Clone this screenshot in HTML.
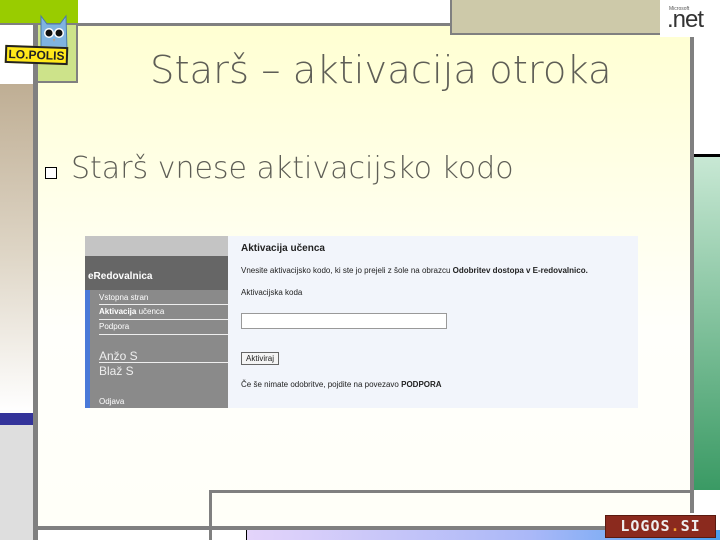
<!DOCTYPE html>
<html><head><meta charset="utf-8"><style>
body{margin:0;width:720px;height:540px;overflow:hidden;position:relative;background:#fff;font-family:"Liberation Sans",sans-serif}
div{position:absolute;box-sizing:border-box}
.t{font-family:"DejaVu Sans","Liberation Sans",sans-serif;font-weight:200;color:#5e5e56}
.s{font-size:9px;color:#222;white-space:nowrap}
</style></head><body>
<div style="left:38px;top:25px;width:652px;height:505px;background:linear-gradient(#ffffd2,#fffffb 60%,#fffff8)"></div>
<div style="left:0;top:0;width:78px;height:23px;background:#99cc00"></div>
<div style="left:78px;top:0;width:372px;height:23px;background:#fff"></div>
<div style="left:0;top:23px;width:450px;height:3px;background:#808080"></div>
<div style="left:450px;top:0;width:240px;height:33px;background:#cdc9a9;border-left:2px solid #808080"></div>
<div style="left:450px;top:33px;width:243px;height:2px;background:#808080"></div>
<div style="left:0;top:25px;width:33px;height:59px;background:#fff"></div>
<div style="left:38px;top:25px;width:40px;height:58px;background:#cde38a;border-right:2px solid #808080;border-bottom:2px solid #808080"></div>
<div style="left:0;top:84px;width:33px;height:329px;background:linear-gradient(#bfae94,#ddd4c4 50%,#fff)"></div>
<div style="left:0;top:413px;width:33px;height:12px;background:#33339a"></div>
<div style="left:0;top:425px;width:33px;height:115px;background:#dedede"></div>
<div style="left:33px;top:23px;width:5px;height:517px;background:#808080"></div>
<div style="left:690px;top:33px;width:4px;height:480px;background:#808080"></div>
<div style="left:694px;top:35px;width:26px;height:120px;background:#fff"></div>
<div style="left:694px;top:154px;width:26px;height:3px;background:#000"></div>
<div style="left:694px;top:157px;width:26px;height:333px;background:linear-gradient(#c8e8d4,#3a9a64)"></div>
<div style="left:694px;top:490px;width:26px;height:50px;background:#fff"></div>
<div style="left:209px;top:490px;width:484px;height:3px;background:#808080"></div>
<div style="left:209px;top:490px;width:3px;height:50px;background:#808080"></div>
<div style="left:38px;top:526px;width:652px;height:4px;background:#808080"></div>
<div style="left:38px;top:530px;width:171px;height:10px;background:#fff"></div>
<div style="left:246px;top:530px;width:474px;height:10px;background:linear-gradient(90deg,#e4d4fa,#aab8f8 60%,#4aa0f0);border-left:1px solid #000"></div>
<div style="left:605px;top:515px;width:111px;height:23px;background:#8b2a1e;border:1px solid #5a1a10;color:#eee;font:bold 15px 'DejaVu Sans Mono',monospace;letter-spacing:1px;text-align:center;line-height:21px">LOGOS<span style="color:#f0a030">.</span>SI</div>
<div style="left:660px;top:0;width:55px;height:37px;background:#fff"></div>
<div style="left:669px;top:6px;font-size:5px;color:#555">Microsoft</div>
<div style="left:667px;top:6px;font-size:24px;color:#333;letter-spacing:-1px">.net</div>
<svg style="position:absolute;left:38px;top:14px" width="32" height="38"><path d="M3 2 L9 10 L22 10 L28 2 L29 36 L3 36 Z" fill="#7fb3e0" stroke="#4a7aa8"/><circle cx="11" cy="19" r="5" fill="#fff"/><circle cx="21" cy="19" r="5" fill="#fff"/><circle cx="11" cy="19" r="3.5" fill="#111"/><circle cx="21" cy="19" r="3.5" fill="#111"/><path d="M15 25 L17 25 L16 28Z" fill="#c96"/></svg>
<div style="left:5px;top:46px;width:63px;height:18px;background:#ffe81a;border:2px solid #222;font:bold 12px 'Liberation Sans',sans-serif;color:#222;text-align:center;line-height:14px;transform:rotate(2deg)">LO.POLIS</div>
<div class="t" style="left:150px;top:48px;font-size:38.5px;white-space:nowrap">Starš – aktivacija otroka</div>
<div style="left:45px;top:167px;width:12px;height:12px;border:1px solid #000;background:#fff"></div>
<div class="t" style="left:71px;top:151px;font-size:30px;white-space:nowrap">Starš vnese aktivacijsko kodo</div>
<div style="left:85px;top:236px;width:553px;height:172px;background:#f2f5fb"></div>
<div style="left:85px;top:236px;width:143px;height:20px;background:#c4c4c4"></div>
<div style="left:85px;top:256px;width:143px;height:34px;background:#666"></div>
<div style="left:88px;top:271px;font:bold 10px 'Liberation Sans';color:#fff">eRedovalnica</div>
<div style="left:85px;top:290px;width:143px;height:118px;background:#8a8a8a;border-left:5px solid #4a7ad8"></div>
<div style="left:99px;top:304px;width:129px;height:1px;background:#eee"></div>
<div style="left:99px;top:319px;width:129px;height:1px;background:#eee"></div>
<div style="left:99px;top:334px;width:129px;height:1px;background:#eee"></div>
<div style="left:99px;top:362px;width:129px;height:1px;background:#eee"></div>
<div class="s" style="left:99px;top:293px;color:#fff;font-size:8px">Vstopna stran</div>
<div class="s" style="left:99px;top:307px;color:#fff;font-size:8px"><b>Aktivacija</b> učenca</div>
<div class="s" style="left:99px;top:322px;color:#fff;font-size:8px">Podpora</div>
<div class="s" style="left:99px;top:349px;color:#eee;font-size:12px">Anžo S</div>
<div class="s" style="left:99px;top:364px;color:#eee;font-size:12px">Blaž S</div>
<div class="s" style="left:99px;top:397px;color:#fff;font-size:8px">Odjava</div>
<div class="s" style="left:241px;top:243px;font-weight:bold;font-size:10px">Aktivacija učenca</div>
<div class="s" style="left:241px;top:266px;font-size:8px">Vnesite aktivacijsko kodo, ki ste jo prejeli z šole na obrazcu <b>Odobritev dostopa v E-redovalnico.</b></div>
<div class="s" style="left:241px;top:288px;font-size:8px">Aktivacijska koda</div>
<div style="left:241px;top:313px;width:206px;height:16px;background:#fff;border:1px solid #999"></div>
<div class="s" style="left:241px;top:352px;font-size:8px;border:1px solid #666;background:#f4f4f4;padding:1px 4px">Aktiviraj</div>
<div class="s" style="left:241px;top:380px;font-size:8px">Če še nimate odobritve, pojdite na povezavo <b>PODPORA</b></div>
</body></html>
